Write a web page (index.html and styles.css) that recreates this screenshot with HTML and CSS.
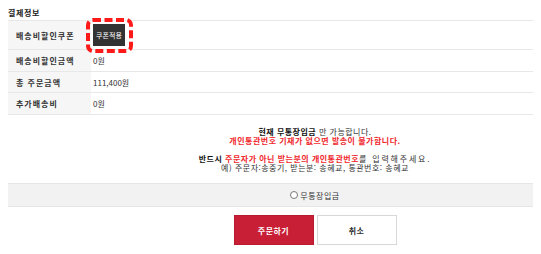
FILE: index.html
```html
<!DOCTYPE html>
<html lang="ko">
<head>
<meta charset="utf-8">
<link rel="stylesheet" href="styles.css">
</head>
<body>
<div class="wrap">
  <h2 class="title">결제정보</h2>
  <table class="info">
    <tr class="r1">
      <th>배송비할인쿠폰</th>
      <td><span class="coupon"><button class="coupon-btn">쿠폰적용</button><span class="ring"></span></span></td>
    </tr>
    <tr class="r2">
      <th>배송비할인금액</th>
      <td>0원</td>
    </tr>
    <tr class="r3">
      <th>총 주문금액</th>
      <td>111,400원</td>
    </tr>
    <tr class="r4">
      <th>추가배송비</th>
      <td>0원</td>
    </tr>
  </table>
  <div class="notice">
    <p><b>현재 무통장입금</b> 만 가능합니다.<br><b class="red">개인통관번호 기재가 없으면 발송이 불가합니다.</b></p>
    <p><b>반드시 <span class="red">주문자가 아닌 받는분의 개인통관번호</span></b><span class="wide">를 입력해주세요.</span><br>예) 주문자:송중기, 받는분: 송혜교, 통관번호: 송혜교</p>
  </div>
  <div class="paybar">
    <label class="radio"><span class="dot"></span>무통장입금</label>
  </div>
  <div class="actions">
    <button class="btn btn-order">주문하기</button>
    <button class="btn btn-cancel">취소</button>
  </div>
</div>
</body>
</html>
```

FILE: styles.css
```css
html, body { overflow: hidden; }
body {
  margin: 8px;
  font-family: "Noto Sans CJK KR", "Noto Sans", sans-serif;
  color: #222;
  background: #fff;
}
.wrap { width: 614px; }
.title {
  margin: 0;
  font-size: 8px;
  line-height: 10px;
  font-weight: 700;
  letter-spacing: 0.6px;
  color: #222;
  height: 12px;
}
.info {
  width: 100%;
  border-collapse: collapse;
  border-top: 1px solid #e8e8e8;
  font-size: 8px;
}
.info th, .info td {
  border-bottom: 1px solid #e8e8e8;
  padding: 0;
  vertical-align: middle;
}
.info th {
  width: 83px;
  background: #f6f6f6;
  text-align: left;
  padding-left: 8px;
  box-sizing: border-box;
  font-weight: 700;
  letter-spacing: 1px;
  color: #333;
}
.info td { padding-left: 2px; color: #333; }
.r1 { height: 29px; }
.r2 { height: 22px; }
.r3 { height: 21px; }
.r4 { height: 22px; }
.coupon {
  position: relative;
  display: inline-block;
  vertical-align: middle;
  line-height: 0;
}
.coupon-btn {
  border: 0;
  background: #333;
  color: #fff;
  font-family: inherit;
  font-size: 7px;
  width: 32px;
  height: 22px;
  padding: 0;
  line-height: 22px;
}
.ring {
  position: absolute;
  left: -7px;
  top: -6px;
  width: 39px;
  height: 27px;
  border: 4px dashed #ff1a1a;
  border-radius: 7px;
}
.notice {
  margin-top: 12px;
  text-align: center;
  font-size: 8px;
  line-height: 9px;
  color: #333;
  letter-spacing: 0.5px;
}
.notice p { margin: 0 0 9px; }
.notice b { color: #111; font-weight: 700; }
.notice .red { color: #f0282d; }
.notice .wide { letter-spacing: 1.8px; }
.paybar {
  margin-top: 11px;
  height: 22px;
  background: #f2f2f2;
  border-top: 1px solid #e6e6e6;
  border-bottom: 1px solid #e6e6e6;
  display: flex;
  align-items: center;
  justify-content: center;
  font-size: 8px;
  color: #333;
}
.radio { display: flex; align-items: center; gap: 2px; letter-spacing: 0.5px; }
.dot {
  width: 6px; height: 6px;
  border: 1px solid #777;
  border-radius: 50%;
  background: #fff;
}
.actions {
  margin-top: 8px;
  display: flex;
  justify-content: center;
  gap: 3px;
}
.btn {
  width: 80px;
  height: 30px;
  font-family: inherit;
  font-size: 8px;
  font-weight: 700;
  padding: 0;
  letter-spacing: 0.5px;
}
.btn-order { background: #c81e36; color: #fff; border: 1px solid #b81a30; }
.btn-cancel { background: #fff; color: #333; border: 1px solid #d8d8d8; }
```
